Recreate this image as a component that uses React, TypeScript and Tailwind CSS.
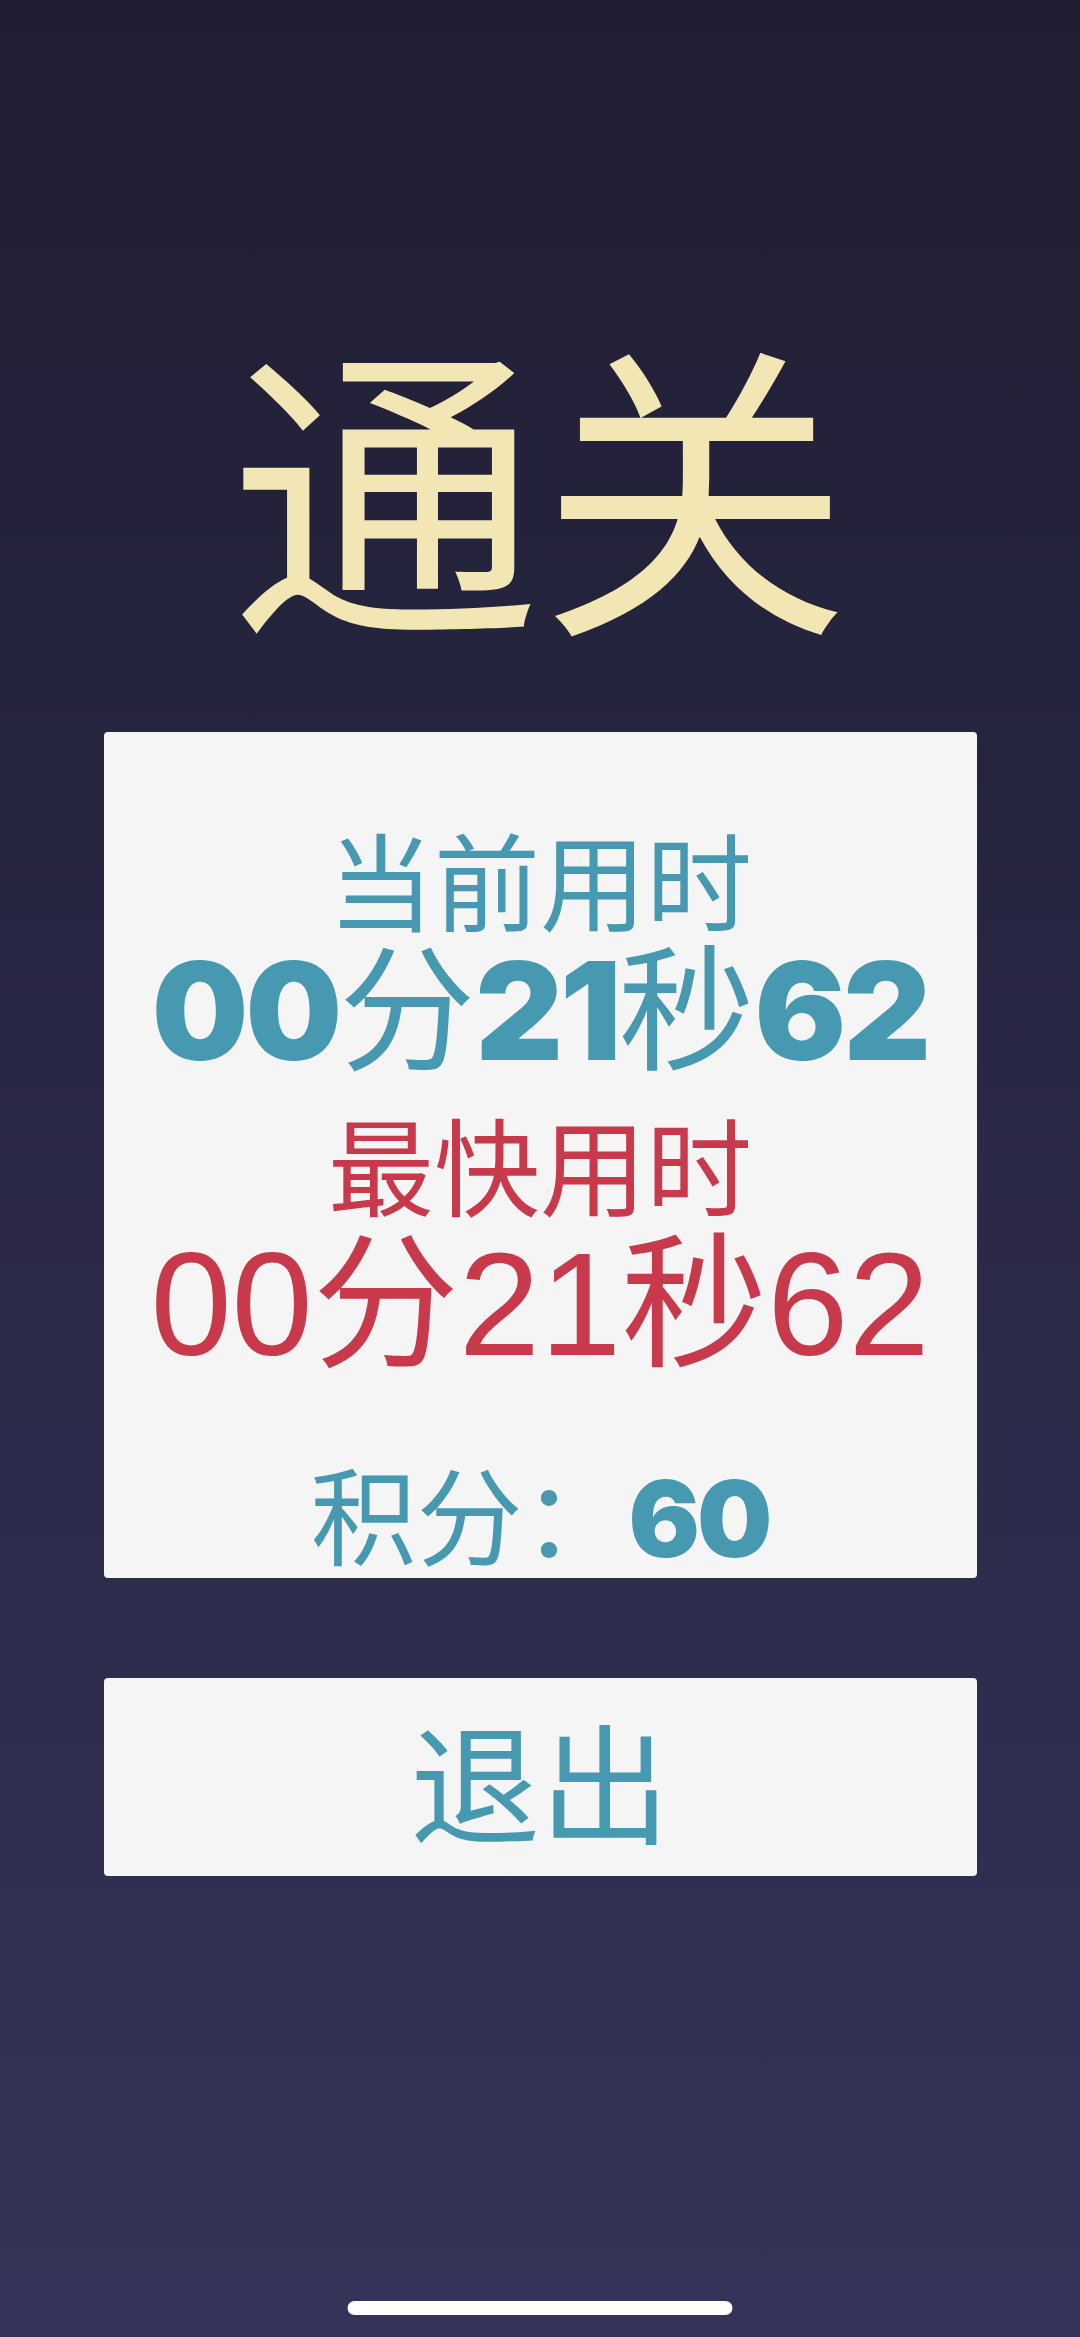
const cjk = '"Noto Sans CJK SC", "Noto Sans", sans-serif';
const heavy = '"Inter", "Roboto", sans-serif';

function TimeBold({ parts }: { parts: string[] }) {
  // digits heavy, han characters stay regular weight
  return (
    <div className="flex items-baseline justify-center leading-none">
      {parts.map((p, i) =>
        /\d/.test(p) ? (
          <span key={i} className="font-black tracking-[-3px]" style={{ fontFamily: heavy }}>
            {p}
          </span>
        ) : (
          <span key={i} className="font-normal leading-[0.8]" style={{ fontFamily: cjk }}>
            {p}
          </span>
        )
      )}
    </div>
  );
}

export default function App() {
  return (
    <div
      className="relative min-h-[2337px] w-full bg-gradient-to-b from-[#1f1e33] to-[#353359] flex flex-col items-center"
      style={{ fontFamily: cjk }}
    >
      <h1 className="mt-[322px] text-[310px] leading-none text-[#f3e6b5] font-normal">通关</h1>

      <div className="mt-[100px] w-[873px] h-[846px] bg-[#f5f5f5] rounded-[4px] flex flex-col items-center text-[#4699b0]">
        <p className="mt-[92px] text-[106px] leading-none">当前用时</p>
        <div className="mt-[13px] text-[136px]">
          <TimeBold parts={["00", "分", "21", "秒", "62"]} />
        </div>
        <p className="mt-[30px] text-[106px] leading-none text-[#c8394b]">最快用时</p>
        <p
          className="mt-[17px] text-[146px] leading-none text-[#c8394b]"
          style={{ fontFamily: '"Liberation Sans", "Noto Sans CJK SC", sans-serif' }}
        >
          00分21秒62
        </p>
        <div className="mt-auto mb-[6px] flex items-baseline text-[106px] leading-none">
          <span>积分：</span>
          <span className="font-black tracking-[-3px]" style={{ fontFamily: heavy }}>60</span>
        </div>
      </div>

      <button className="mt-[100px] w-[873px] h-[198px] bg-[#f5f5f5] rounded-[4px] flex items-center justify-center text-[130px] leading-none text-[#4699b0]">
        退出
      </button>

      <div className="absolute bottom-[22px] left-1/2 -translate-x-1/2 w-[385px] h-[14px] rounded-full bg-white" />
    </div>
  );
}
